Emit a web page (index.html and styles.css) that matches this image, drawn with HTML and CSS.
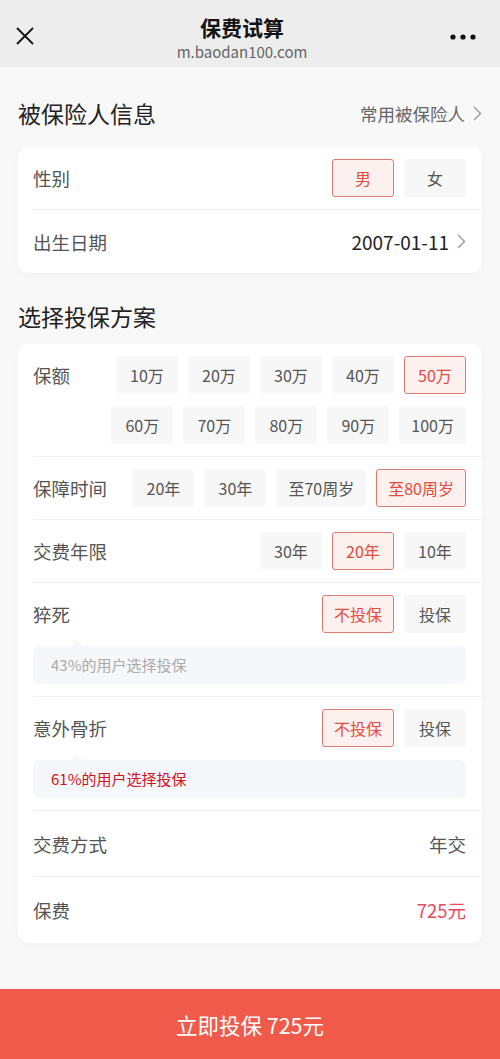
FILE: index.html
```html
<!DOCTYPE html>
<html lang="zh-CN">
<head>
    <meta charset="UTF-8">
    <meta name="viewport" content="width=device-width, initial-scale=1.0">
    <title>保费试算</title>
    <link rel="stylesheet" href="styles.css">
</head>
<body>
    <header class="topbar">
        <svg class="close-icon" width="18" height="18" viewBox="0 0 18 18">
            <path d="M1 1L17 17M17 1L1 17" stroke="#111" stroke-width="1.8" fill="none"/>
        </svg>
        <div class="topbar-title">
            <div class="title">保费试算</div>
            <div class="subtitle">m.baodan100.com</div>
        </div>
        <svg class="more-icon" width="26" height="6" viewBox="0 0 26 6">
            <circle cx="3" cy="3" r="2.6" fill="#111"/>
            <circle cx="13" cy="3" r="2.6" fill="#111"/>
            <circle cx="23" cy="3" r="2.6" fill="#111"/>
        </svg>
    </header>

    <div class="section-head first">
        <h2>被保险人信息</h2>
        <span class="head-link">常用被保险人
            <svg class="chevron" width="9" height="15" viewBox="0 0 9 15"><path d="M1 1L7.5 7.5L1 14" stroke="#999" stroke-width="1.4" fill="none"/></svg>
        </span>
    </div>

    <div class="card">
        <div class="row">
            <span class="label">性别</span>
            <div class="options">
                <span class="opt active">男</span>
                <span class="opt">女</span>
            </div>
        </div>
        <div class="row row-text">
            <span class="label">出生日期</span>
            <span class="value dark">2007-01-11
                <svg class="chevron" width="9" height="15" viewBox="0 0 9 15"><path d="M1 1L7.5 7.5L1 14" stroke="#999" stroke-width="1.4" fill="none"/></svg>
            </span>
        </div>
    </div>

    <div class="section-head">
        <h2>选择投保方案</h2>
    </div>

    <div class="card">
        <div class="row top">
            <span class="label">保额</span>
            <div class="options wrap">
                <span class="opt">10万</span>
                <span class="opt">20万</span>
                <span class="opt">30万</span>
                <span class="opt">40万</span>
                <span class="opt active">50万</span>
                <span class="opt">60万</span>
                <span class="opt">70万</span>
                <span class="opt">80万</span>
                <span class="opt">90万</span>
                <span class="opt">100万</span>
            </div>
        </div>
        <div class="row">
            <span class="label">保障时间</span>
            <div class="options">
                <span class="opt">20年</span>
                <span class="opt">30年</span>
                <span class="opt">至70周岁</span>
                <span class="opt active">至80周岁</span>
            </div>
        </div>
        <div class="row">
            <span class="label">交费年限</span>
            <div class="options">
                <span class="opt">30年</span>
                <span class="opt active">20年</span>
                <span class="opt">10年</span>
            </div>
        </div>
        <div class="row col">
            <div class="row-main">
                <span class="label">猝死</span>
                <div class="options">
                    <span class="opt active">不投保</span>
                    <span class="opt">投保</span>
                </div>
            </div>
            <div class="tip">43%的用户选择投保</div>
        </div>
        <div class="row col">
            <div class="row-main">
                <span class="label">意外骨折</span>
                <div class="options">
                    <span class="opt active">不投保</span>
                    <span class="opt">投保</span>
                </div>
            </div>
            <div class="tip hot">61%的用户选择投保</div>
        </div>
        <div class="row row-text tall">
            <span class="label">交费方式</span>
            <span class="value">年交</span>
        </div>
        <div class="row row-text tall">
            <span class="label">保费</span>
            <span class="value price">725元</span>
        </div>
    </div>

    <div class="submit-bar">立即投保 725元</div>
</body>
</html>
```

FILE: styles.css
```css
* {
    box-sizing: border-box;
}
body {
    margin: 0;
    background-color: #f8f8f8;
    font-family: "Noto Sans CJK SC", "Noto Sans", sans-serif;
    color: #222;
}
.topbar {
    height: 67px;
    background-color: #ededed;
    display: flex;
    align-items: center;
    justify-content: space-between;
    padding: 0 24px 0 16px;
}
.close-icon {
    margin-top: 5px;
}
.more-icon {
    margin-top: 7px;
}
.topbar-title {
    text-align: center;
    padding-top: 7px;
}
.title {
    font-size: 21px;
    font-weight: bold;
    line-height: 28px;
    color: #111;
}
.subtitle {
    font-size: 15px;
    line-height: 21px;
    color: #666;
}
.section-head {
    display: flex;
    align-items: center;
    justify-content: space-between;
    padding: 28px 18px 13px;
}
.section-head.first {
    padding: 31px 18px 19px;
}
.section-head h2 {
    margin: 0;
    font-size: 23px;
    font-weight: normal;
    line-height: 30px;
    color: #222;
}
.head-link {
    font-size: 17.5px;
    color: #666;
    display: flex;
    align-items: center;
    gap: 8px;
}
.card {
    margin: 0 18px;
    background-color: #fff;
    border-radius: 10px;
    box-shadow: 0 2px 6px rgba(0,0,0,0.03);
    overflow: hidden;
}
.row {
    margin-left: 15px;
    padding: 12px 16px 12px 0;
    border-bottom: 1px solid #f0f0f0;
    display: flex;
    align-items: center;
    justify-content: space-between;
}
.row:last-child {
    border-bottom: none;
}
.row.top {
    align-items: flex-start;
}
.row.col {
    flex-direction: column;
    align-items: stretch;
}
.row-main {
    display: flex;
    align-items: center;
    justify-content: space-between;
}
.row-text {
    height: 63px;
    padding-top: 0;
    padding-bottom: 0;
}
.row-text.tall {
    height: 66px;
}
.label {
    font-size: 18.5px;
    line-height: 38px;
    color: #555;
    white-space: nowrap;
}
.value {
    font-size: 18.5px;
    color: #555;
    display: flex;
    align-items: center;
    gap: 8px;
}
.value.dark {
    color: #222;
    font-size: 19px;
}
.value.price {
    color: #e84a5d;
}
.options {
    display: flex;
    justify-content: flex-end;
    gap: 10px;
}
.options.wrap {
    flex-wrap: wrap;
    row-gap: 12px;
    width: 355px;
}
.opt {
    min-width: 62px;
    height: 38px;
    padding: 0 11px;
    border: 1px solid #f7f7f7;
    border-radius: 3px;
    background-color: #f7f7f7;
    font-size: 16px;
    color: #555;
    display: flex;
    align-items: center;
    justify-content: center;
}
.opt.active {
    border-color: #e2796f;
    background-color: #fdf1ef;
    color: #e54b3c;
}
.tip {
    position: relative;
    margin-top: 13px;
    height: 38px;
    padding-left: 18px;
    border-radius: 6px;
    background-color: #f6f7fa;
    font-size: 15px;
    line-height: 38px;
    color: #aaa;
}
.tip::before {
    content: "";
    position: absolute;
    left: 38px;
    top: -6px;
    border-left: 6px solid transparent;
    border-right: 6px solid transparent;
    border-bottom: 6px solid #f6f7fa;
}
.tip.hot {
    color: #d4101e;
}
.submit-bar {
    margin-top: 46px;
    height: 70px;
    background-color: #f05a4b;
    color: #fff;
    font-size: 21.5px;
    display: flex;
    align-items: center;
    justify-content: center;
}
```
